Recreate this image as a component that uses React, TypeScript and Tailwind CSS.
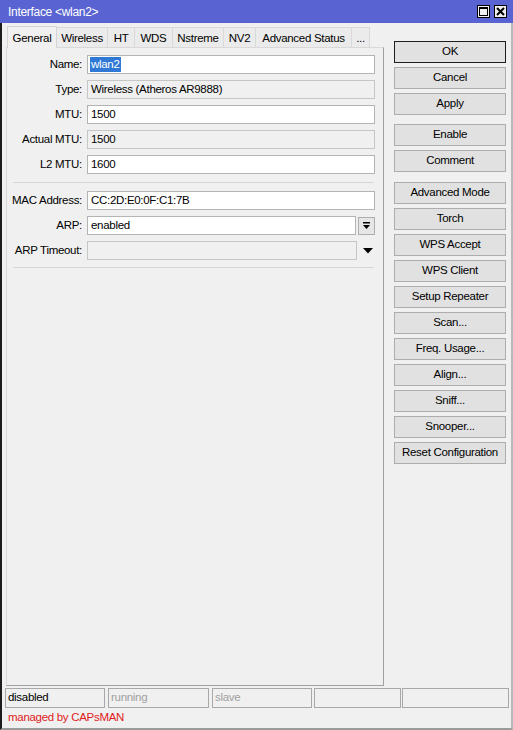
import React from "react";

function Field({
  value,
  ro,
  w,
  selected,
}: {
  value: string;
  ro?: boolean;
  w: string;
  selected?: boolean;
}) {
  return (
    <div
      className={`${w} h-[19px] border flex items-center pl-[2px] leading-none whitespace-nowrap ${
        ro ? "border-[#c6c6c6] bg-[#f0f0f0]" : "border-[#b4b4b4] bg-white"
      }`}
    >
      {selected ? (
        <span className="bg-[#2f78d6] text-white pl-[1px] pr-[1px] py-[2px]">{value}</span>
      ) : (
        <span className="pl-[1px]">{value}</span>
      )}
    </div>
  );
}

function Row({
  label,
  children,
  cls,
}: {
  label: string;
  children: React.ReactNode;
  cls?: string;
}) {
  return (
    <div className={`flex items-center h-[19px] ${cls ?? ""}`}>
      <div className="w-[75px] text-right whitespace-nowrap">{label}</div>
      <div className="ml-[5px] flex items-center">{children}</div>
    </div>
  );
}

function Btn({ label, cls, def }: { label: string; cls: string; def?: boolean }) {
  return (
    <button
      type="button"
      className={`h-[22px] w-[112px] flex items-center justify-center border bg-[#e1e1e1] whitespace-nowrap ${
        def ? "border-[#1e1e1e]" : "border-[#adadad]"
      } ${cls}`}
    >
      {label}
    </button>
  );
}

const tabs = [
  { label: "Wireless", w: "w-[51px]" },
  { label: "HT", w: "w-[27px]" },
  { label: "WDS", w: "w-[38px]" },
  { label: "Nstreme", w: "w-[51px]" },
  { label: "NV2", w: "w-[32px]" },
  { label: "Advanced Status", w: "w-[96px]" },
  { label: "...", w: "w-[18px]" },
];

export default function App() {
  return (
    <div className="w-[513px] h-[730px] bg-[#f0f0f0] flex flex-col font-['Liberation_Sans',Arial,sans-serif] text-[11.5px] tracking-[-0.3px] text-black overflow-hidden">
      {/* Title bar */}
      <div className="h-[23px] bg-[#5964d2] flex items-center pl-[8px] pr-[6px] shrink-0">
        <span className="text-white text-[12px]">Interface &lt;wlan2&gt;</span>
        <div className="ml-auto flex items-center gap-[4px]">
          <div className="w-[13px] h-[13px] bg-[#f0f0f0] border border-black flex items-center justify-center">
            <svg width="9" height="9" viewBox="0 0 9 9">
              <rect x="0.5" y="0.5" width="8" height="8" fill="none" stroke="black" strokeWidth="1" />
              <rect x="0" y="0" width="9" height="2" fill="black" />
            </svg>
          </div>
          <div className="w-[13px] h-[13px] bg-[#f0f0f0] border border-black flex items-center justify-center">
            <svg width="9" height="9" viewBox="0 0 9 9">
              <path d="M1 1 L8 8 M8 1 L1 8" stroke="black" strokeWidth="2" />
            </svg>
          </div>
        </div>
      </div>

      {/* Body */}
      <div className="flex-1 flex flex-col border-l-2 border-l-[#1c1c1c] border-r-2 border-r-[#b8b8b8] border-b-2 border-b-[#9a9a9a]">
        <div className="flex pt-[3px] pl-[4px]">
          {/* Left column */}
          <div className="flex flex-col w-[378px]">
            <div className="flex items-end h-[21px] pl-[1px]">
              <div className="relative z-10 -mb-px h-[22px] w-[50px] bg-[#f0f0f0] border-l border-t border-r border-[#d4d4d4] flex items-start justify-center pt-[3px]">
                General
              </div>
              {tabs.map((t) => (
                <div
                  key={t.label}
                  className={`${t.w} h-[20px] border-t border-r border-[#d9d9d9] bg-[#ebebeb] flex items-start pt-[2px] justify-center whitespace-nowrap`}
                >
                  {t.label}
                </div>
              ))}
            </div>
            <div className="h-[639px] border-t border-l border-t-[#d9d9d9] border-l-[#d9d9d9] border-r border-b border-r-[#a0a0a0] border-b-[#a0a0a0] pt-[7px] flex flex-col">
              <Row label="Name:">
                <Field value="wlan2" w="w-[288px]" selected />
              </Row>
              <Row label="Type:" cls="mt-[6px]">
                <Field value="Wireless (Atheros AR9888)" w="w-[288px]" ro />
              </Row>
              <Row label="MTU:" cls="mt-[6px]">
                <Field value="1500" w="w-[288px]" />
              </Row>
              <Row label="Actual MTU:" cls="mt-[6px]">
                <Field value="1500" w="w-[288px]" ro />
              </Row>
              <Row label="L2 MTU:" cls="mt-[6px]">
                <Field value="1600" w="w-[288px]" />
              </Row>
              <div className="ml-[6px] mt-[8px] w-[361px] h-px bg-[#d6d6d6]" />
              <Row label="MAC Address:" cls="mt-[8px]">
                <Field value="CC:2D:E0:0F:C1:7B" w="w-[288px]" />
              </Row>
              <Row label="ARP:" cls="mt-[6px]">
                <Field value="enabled" w="w-[269px]" />
                <div className="ml-[2px] w-[17px] h-[18px] border border-[#adadad] bg-[#e6e6e6] flex items-center justify-center">
                  <svg width="9" height="9" viewBox="0 0 9 9">
                    <rect x="1" y="1" width="7" height="1.5" fill="black" />
                    <polygon points="1,4 8,4 4.5,8" fill="black" />
                  </svg>
                </div>
              </Row>
              <Row label="ARP Timeout:" cls="mt-[6px]">
                <Field value="" w="w-[270px]" ro />
                <svg className="ml-[6px]" width="10" height="6" viewBox="0 0 10 6">
                  <polygon points="0,0 10,0 5,5.5" fill="black" />
                </svg>
              </Row>
              <div className="ml-[6px] mt-[7px] w-[361px] h-px bg-[#d6d6d6]" />
            </div>
          </div>

          {/* Right column buttons */}
          <div className="ml-[10px] flex flex-col pt-[15px]">
            <Btn label="OK" cls="" def />
            <Btn label="Cancel" cls="mt-[4px]" />
            <Btn label="Apply" cls="mt-[4px]" />
            <Btn label="Enable" cls="mt-[9px]" />
            <Btn label="Comment" cls="mt-[4px]" />
            <Btn label="Advanced Mode" cls="mt-[10px]" />
            <Btn label="Torch" cls="mt-[4px]" />
            <Btn label="WPS Accept" cls="mt-[4px]" />
            <Btn label="WPS Client" cls="mt-[4px]" />
            <Btn label="Setup Repeater" cls="mt-[4px]" />
            <Btn label="Scan..." cls="mt-[4px]" />
            <Btn label="Freq. Usage..." cls="mt-[4px]" />
            <Btn label="Align..." cls="mt-[4px]" />
            <Btn label="Sniff..." cls="mt-[4px]" />
            <Btn label="Snooper..." cls="mt-[4px]" />
            <Btn label="Reset Configuration" cls="mt-[4px]" />
          </div>
        </div>

        {/* Status bar */}
        <div className="flex mt-[2px] h-[20px] pl-[3px]">
          <div className="w-[100px] border border-[#a8a8a8] flex items-center pl-[2px]">disabled</div>
          <div className="ml-[3px] w-[101px] border border-[#a8a8a8] flex items-center pl-[2px] text-[#a0a0a0]">running</div>
          <div className="ml-[3px] w-[100px] border border-[#a8a8a8] flex items-center pl-[2px] text-[#a0a0a0]">slave</div>
          <div className="ml-[2px] w-[87px] border border-[#a8a8a8]" />
          <div className="ml-[1px] w-[107px] border border-[#a8a8a8]" />
        </div>
        <div className="h-[20px] flex items-center pl-[6px] text-[#e01b1b]">managed by CAPsMAN</div>
      </div>
    </div>
  );
}
